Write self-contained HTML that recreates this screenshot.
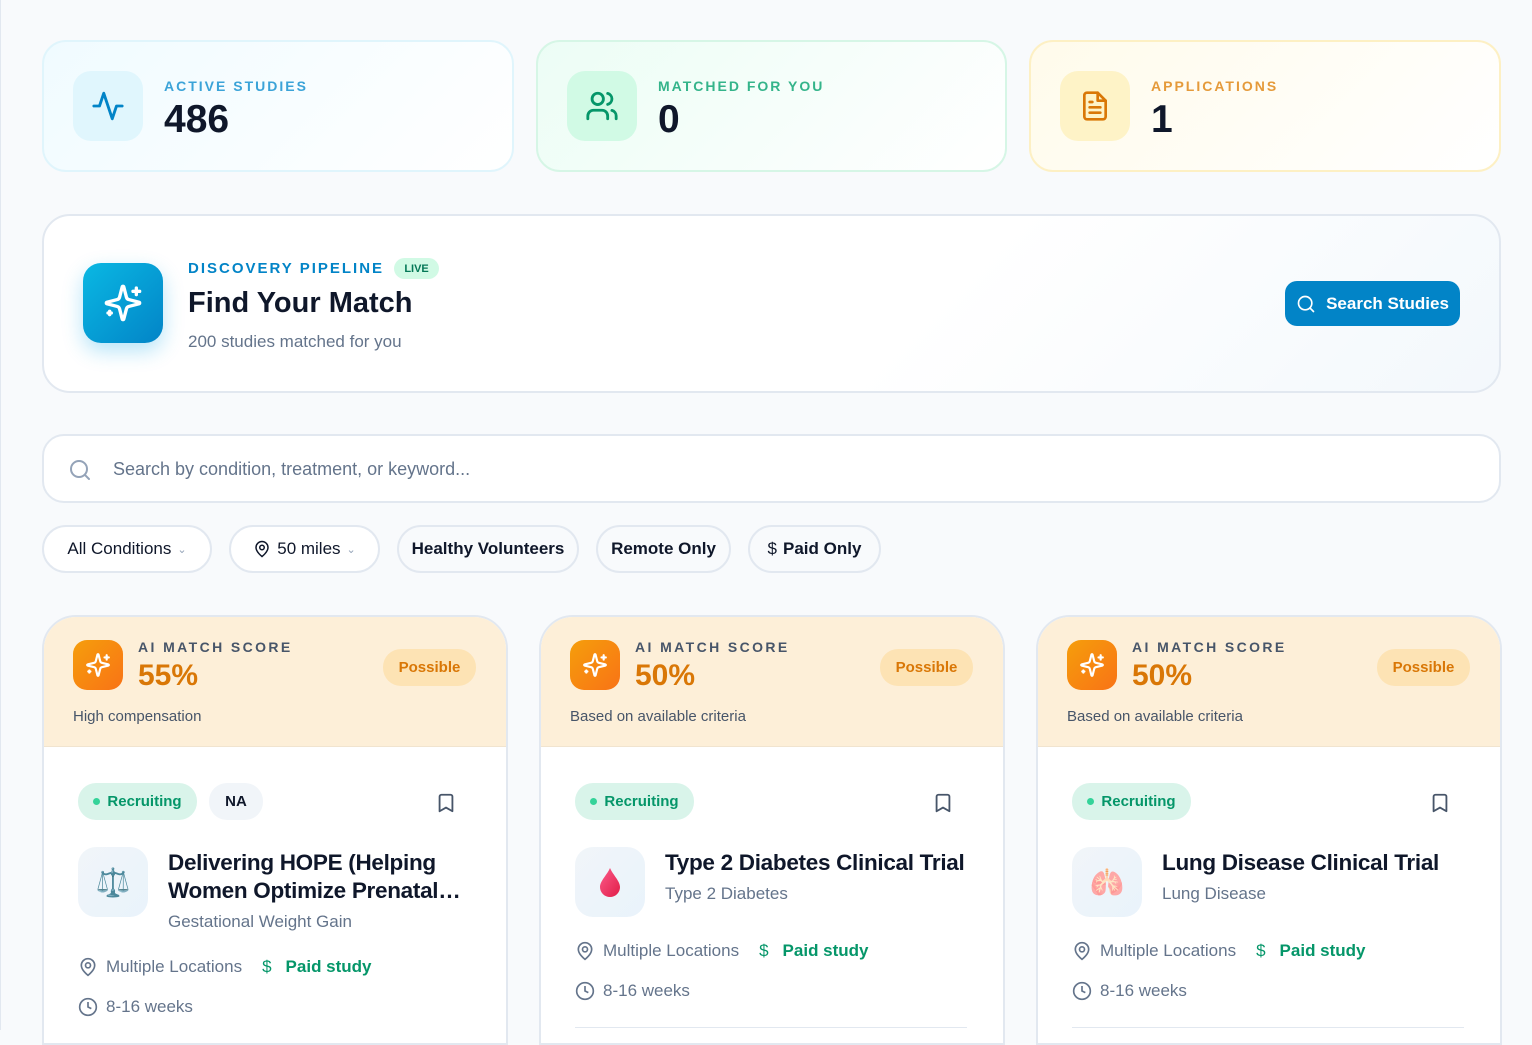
<!DOCTYPE html>
<html><head><meta charset="utf-8">
<style>
*{box-sizing:border-box;margin:0;padding:0}
body{width:1532px;height:1030px;overflow:hidden;background:#f8fafc;font-family:"Liberation Sans","DejaVu Sans",sans-serif;color:#0f172a;position:relative}
.a{position:absolute}
.stat{position:absolute;top:40px;width:472px;height:132px;border-radius:24px;border:2px solid}
.sicon{position:absolute;left:29px;top:29px;width:70px;height:70px;border-radius:18px;display:flex;align-items:center;justify-content:center}
.slabel{position:absolute;left:120px;top:36px;font-size:14px;font-weight:bold;letter-spacing:2px}
.snum{position:absolute;left:120px;top:56px;font-size:39px;font-weight:bold;color:#0f172a}
.pill{position:absolute;top:525px;height:48px;border-radius:24px;border:2px solid #e2e8f0;background:#fff;font-size:17px;display:flex;align-items:center;justify-content:center;gap:6px;color:#0f172a}
.card{position:absolute;top:615px;width:466px;height:430px;border-radius:34px 34px 0 0;border:2px solid #e2e8f0;background:#fff;overflow:hidden}
.ch{height:130px;background:#fdefd8;position:relative;border-bottom:1px solid #f1e4cf}
.ci{position:absolute;left:29px;top:23px;width:50px;height:50px;border-radius:14px;background:linear-gradient(135deg,#f59e0b,#f97316);display:flex;align-items:center;justify-content:center}
.cl{position:absolute;left:94px;top:22px;font-size:14px;font-weight:bold;letter-spacing:2.4px;color:#475569}
.cs{position:absolute;left:94px;top:42px;font-size:30px;font-weight:bold;color:#d97706}
.cp{position:absolute;right:30px;top:32px;width:93px;height:37px;border-radius:18px;background:#fde3b4;color:#d97706;font-weight:bold;font-size:15px;display:flex;align-items:center;justify-content:center}
.csub{position:absolute;left:29px;top:91px;font-size:15px;color:#475569}
.tag{position:absolute;top:166px;height:37px;border-radius:18px;font-size:15px;font-weight:bold;display:flex;align-items:center;justify-content:center;gap:7px}
.rec{left:34px;width:119px;background:#d9f4ea;color:#059669}
.rec:before{content:"";width:7px;height:7px;border-radius:50%;background:#34d399}
.bm{position:absolute;right:49px;top:174px}
.ib{position:absolute;left:34px;top:230px;width:70px;height:70px;border-radius:18px;background:linear-gradient(135deg,#f1f5f9,#e9f3fb);display:flex;align-items:center;justify-content:center;font-size:28px}
.tt{position:absolute;left:124px;top:232px;font-size:22.5px;font-weight:bold;line-height:28px;color:#0f172a;letter-spacing:-0.3px}
.st{position:absolute;left:124px;font-size:17px;color:#64748b}
.meta{position:absolute;left:34px;font-size:17px;color:#64748b;display:flex;align-items:center;gap:8px;white-space:nowrap}
.paid{color:#059669;font-weight:bold}
.div{position:absolute;left:34px;right:36px;top:410px;height:1px;background:#e2e8f0}
</style></head><body>
<div class="a" style="left:0;top:0;width:1px;height:1030px;background:#e2e8f0"></div>

<div class="stat" style="left:42px;border-color:#e0f5fc;background:linear-gradient(135deg,#f0fbff,#fff)">
 <div class="sicon" style="background:#e0f6fd"><svg width="34" height="34" viewBox="0 0 24 24" fill="none" stroke="#0284c7" stroke-width="2" stroke-linecap="round" stroke-linejoin="round"><path d="M22 12h-4l-3 9L9 3l-3 9H2"/></svg></div>
 <div class="slabel" style="color:#3ba3d8">ACTIVE STUDIES</div>
 <div class="snum">486</div>
</div>
<div class="stat" style="left:536px;width:471px;border-color:#d6f6e6;background:linear-gradient(135deg,#ecfdf5,#fff)">
 <div class="sicon" style="background:#d1fae5"><svg width="34" height="34" viewBox="0 0 24 24" fill="none" stroke="#059669" stroke-width="2" stroke-linecap="round" stroke-linejoin="round"><path d="M16 21v-2a4 4 0 0 0-4-4H6a4 4 0 0 0-4 4v2"/><circle cx="9" cy="7" r="4"/><path d="M22 21v-2a4 4 0 0 0-3-3.87M16 3.13a4 4 0 0 1 0 7.75"/></svg></div>
 <div class="slabel" style="color:#34b48a">MATCHED FOR YOU</div>
 <div class="snum">0</div>
</div>
<div class="stat" style="left:1029px;border-color:#fdf0c4;background:linear-gradient(135deg,#fffbeb,#fff)">
 <div class="sicon" style="background:#fef3c7"><svg width="32" height="32" viewBox="0 0 24 24" fill="none" stroke="#d97706" stroke-width="2" stroke-linecap="round" stroke-linejoin="round"><path d="M14 2H6a2 2 0 0 0-2 2v16a2 2 0 0 0 2 2h12a2 2 0 0 0 2-2V8z"/><path d="M14 2v6h6M16 13H8M16 17H8M10 9H8"/></svg></div>
 <div class="slabel" style="color:#e59a3a">APPLICATIONS</div>
 <div class="snum">1</div>
</div>

<div class="a" style="left:42px;top:214px;width:1459px;height:179px;border-radius:28px;border:2px solid #e2e8f0;background:linear-gradient(135deg,#fff 60%,#f3f8fc)">
 <div class="a" style="left:39px;top:47px;width:80px;height:80px;border-radius:18px;background:linear-gradient(135deg,#0ab8e3,#0284c7);box-shadow:0 8px 20px rgba(14,165,233,.3);display:flex;align-items:center;justify-content:center"><svg width="40" height="40" viewBox="0 0 24 24" fill="none" stroke="#fff" stroke-width="2" stroke-linecap="round" stroke-linejoin="round"><path d="M9.94 15.5A2 2 0 0 0 8.5 14.06l-6.14-1.58a.5.5 0 0 1 0-.96L8.5 9.94A2 2 0 0 0 9.94 8.5l1.58-6.14a.5.5 0 0 1 .96 0l1.58 6.14a2 2 0 0 0 1.44 1.44l6.14 1.58a.5.5 0 0 1 0 .96l-6.14 1.58a2 2 0 0 0-1.44 1.44l-1.58 6.14a.5.5 0 0 1-.96 0z"/><path d="M20 3v4M22 5h-4M4 17v2M5 18H3"/></svg></div>
 <div class="a" style="left:144px;top:42px;display:flex;align-items:center;gap:10px"><span style="font-size:15px;font-weight:bold;letter-spacing:2px;color:#0284c7">DISCOVERY PIPELINE</span><span style="width:45px;height:21px;border-radius:11px;background:#d1fae5;color:#047857;font-size:11px;font-weight:bold;display:flex;align-items:center;justify-content:center">LIVE</span></div>
 <div class="a" style="left:144px;top:71px;font-size:29px;font-weight:bold;color:#0f172a">Find Your Match</div>
 <div class="a" style="left:144px;top:116px;font-size:17px;color:#64748b">200 studies matched for you</div>
 <div class="a" style="left:1241px;top:65px;width:175px;height:45px;border-radius:12px;background:#0284c7;color:#fff;font-size:17px;font-weight:bold;display:flex;align-items:center;justify-content:center;gap:10px"><svg width="20" height="20" viewBox="0 0 24 24" fill="none" stroke="#fff" stroke-width="2" stroke-linecap="round"><circle cx="11" cy="11" r="8"/><path d="m21 21-4.3-4.3"/></svg>Search Studies</div>
</div>

<div class="a" style="left:42px;top:434px;width:1459px;height:69px;border-radius:22px;border:2px solid #e2e8f0;background:#fff">
 <svg class="a" style="left:24px;top:22px" width="24" height="24" viewBox="0 0 24 24" fill="none" stroke="#94a3b8" stroke-width="2" stroke-linecap="round"><circle cx="11" cy="11" r="8"/><path d="m21 21-4.3-4.3"/></svg>
 <div class="a" style="left:69px;top:23px;font-size:18px;color:#64748b">Search by condition, treatment, or keyword...</div>
</div>

<div class="pill" style="left:42px;width:170px">All Conditions <span style="font-size:11px;color:#94a3b8">&#8964;</span></div>
<div class="pill" style="left:229px;width:151px"><svg width="18" height="18" viewBox="0 0 24 24" fill="none" stroke="#0f172a" stroke-width="2"><path d="M20 10c0 6-8 12-8 12s-8-6-8-12a8 8 0 0 1 16 0Z"/><circle cx="12" cy="10" r="3"/></svg>50 miles <span style="font-size:11px;color:#94a3b8">&#8964;</span></div>
<div class="pill" style="left:397px;width:182px;background:#f8fafc;font-weight:bold">Healthy Volunteers</div>
<div class="pill" style="left:596px;width:135px;background:#f8fafc;font-weight:bold">Remote Only</div>
<div class="pill" style="left:748px;width:133px;background:#f8fafc;font-weight:bold"><span style="font-weight:normal">$</span> Paid Only</div>

<!-- Card 1 -->
<div class="card" style="left:42px">
 <div class="ch"><div class="ci"><svg width="26" height="26" viewBox="0 0 24 24" fill="none" stroke="#fff" stroke-width="2" stroke-linecap="round" stroke-linejoin="round"><path d="M9.94 15.5A2 2 0 0 0 8.5 14.06l-6.14-1.58a.5.5 0 0 1 0-.96L8.5 9.94A2 2 0 0 0 9.94 8.5l1.58-6.14a.5.5 0 0 1 .96 0l1.58 6.14a2 2 0 0 0 1.44 1.44l6.14 1.58a.5.5 0 0 1 0 .96l-6.14 1.58a2 2 0 0 0-1.44 1.44l-1.58 6.14a.5.5 0 0 1-.96 0z"/><path d="M20 3v4M22 5h-4M4 17v2M5 18H3"/></svg></div>
 <div class="cl">AI MATCH SCORE</div><div class="cs">55%</div><div class="cp">Possible</div><div class="csub">High compensation</div></div>
 <div class="tag rec">Recruiting</div>
 <div class="tag" style="left:165px;width:54px;background:#f1f5f9;color:#0f172a">NA</div>
 <svg class="bm" width="22" height="24" viewBox="0 0 24 24" fill="none" stroke="#475569" stroke-width="2" stroke-linejoin="round"><path d="m19 21-7-4-7 4V5a2 2 0 0 1 2-2h10a2 2 0 0 1 2 2v16z"/></svg>
 <div class="ib">⚖️</div>
 <div class="tt">Delivering HOPE (Helping<br>Women Optimize Prenatal…</div>
 <div class="st" style="top:295px">Gestational Weight Gain</div>
 <div class="meta" style="top:340px"><svg width="20" height="20" viewBox="0 0 24 24" fill="none" stroke="#64748b" stroke-width="2"><path d="M20 10c0 6-8 12-8 12s-8-6-8-12a8 8 0 0 1 16 0Z"/><circle cx="12" cy="10" r="3"/></svg>Multiple Locations <span class="paid" style="margin-left:12px;font-weight:normal">$</span><span class="paid" style="margin-left:6px">Paid study</span></div>
 <div class="meta" style="top:380px"><svg width="20" height="20" viewBox="0 0 24 24" fill="none" stroke="#64748b" stroke-width="2"><circle cx="12" cy="12" r="10"/><path d="M12 6v6l4 2"/></svg>8-16 weeks</div>
</div>

<!-- Card 2 -->
<div class="card" style="left:539px">
 <div class="ch"><div class="ci"><svg width="26" height="26" viewBox="0 0 24 24" fill="none" stroke="#fff" stroke-width="2" stroke-linecap="round" stroke-linejoin="round"><path d="M9.94 15.5A2 2 0 0 0 8.5 14.06l-6.14-1.58a.5.5 0 0 1 0-.96L8.5 9.94A2 2 0 0 0 9.94 8.5l1.58-6.14a.5.5 0 0 1 .96 0l1.58 6.14a2 2 0 0 0 1.44 1.44l6.14 1.58a.5.5 0 0 1 0 .96l-6.14 1.58a2 2 0 0 0-1.44 1.44l-1.58 6.14a.5.5 0 0 1-.96 0z"/><path d="M20 3v4M22 5h-4M4 17v2M5 18H3"/></svg></div>
 <div class="cl">AI MATCH SCORE</div><div class="cs">50%</div><div class="cp">Possible</div><div class="csub">Based on available criteria</div></div>
 <div class="tag rec">Recruiting</div>
 <svg class="bm" width="22" height="24" viewBox="0 0 24 24" fill="none" stroke="#475569" stroke-width="2" stroke-linejoin="round"><path d="m19 21-7-4-7 4V5a2 2 0 0 1 2-2h10a2 2 0 0 1 2 2v16z"/></svg>
 <div class="ib"><svg width="24" height="30" viewBox="0 0 24 30"><defs><linearGradient id="d" x1="0" y1="0" x2="1" y2="1"><stop offset="0" stop-color="#fb5b8a"/><stop offset="1" stop-color="#e11d48"/></linearGradient></defs><path d="M12 1C9 8 2 14 2 20a10 10 0 0 0 20 0C22 14 15 8 12 1z" fill="url(#d)"/></svg></div>
 <div class="tt">Type 2 Diabetes Clinical Trial</div>
 <div class="st" style="top:267px">Type 2 Diabetes</div>
 <div class="meta" style="top:324px"><svg width="20" height="20" viewBox="0 0 24 24" fill="none" stroke="#64748b" stroke-width="2"><path d="M20 10c0 6-8 12-8 12s-8-6-8-12a8 8 0 0 1 16 0Z"/><circle cx="12" cy="10" r="3"/></svg>Multiple Locations <span class="paid" style="margin-left:12px;font-weight:normal">$</span><span class="paid" style="margin-left:6px">Paid study</span></div>
 <div class="meta" style="top:364px"><svg width="20" height="20" viewBox="0 0 24 24" fill="none" stroke="#64748b" stroke-width="2"><circle cx="12" cy="12" r="10"/><path d="M12 6v6l4 2"/></svg>8-16 weeks</div>
 <div class="div"></div>
</div>

<!-- Card 3 -->
<div class="card" style="left:1036px">
 <div class="ch"><div class="ci"><svg width="26" height="26" viewBox="0 0 24 24" fill="none" stroke="#fff" stroke-width="2" stroke-linecap="round" stroke-linejoin="round"><path d="M9.94 15.5A2 2 0 0 0 8.5 14.06l-6.14-1.58a.5.5 0 0 1 0-.96L8.5 9.94A2 2 0 0 0 9.94 8.5l1.58-6.14a.5.5 0 0 1 .96 0l1.58 6.14a2 2 0 0 0 1.44 1.44l6.14 1.58a.5.5 0 0 1 0 .96l-6.14 1.58a2 2 0 0 0-1.44 1.44l-1.58 6.14a.5.5 0 0 1-.96 0z"/><path d="M20 3v4M22 5h-4M4 17v2M5 18H3"/></svg></div>
 <div class="cl">AI MATCH SCORE</div><div class="cs">50%</div><div class="cp">Possible</div><div class="csub">Based on available criteria</div></div>
 <div class="tag rec">Recruiting</div>
 <svg class="bm" width="22" height="24" viewBox="0 0 24 24" fill="none" stroke="#475569" stroke-width="2" stroke-linejoin="round"><path d="m19 21-7-4-7 4V5a2 2 0 0 1 2-2h10a2 2 0 0 1 2 2v16z"/></svg>
 <div class="ib">🫁</div>
 <div class="tt">Lung Disease Clinical Trial</div>
 <div class="st" style="top:267px">Lung Disease</div>
 <div class="meta" style="top:324px"><svg width="20" height="20" viewBox="0 0 24 24" fill="none" stroke="#64748b" stroke-width="2"><path d="M20 10c0 6-8 12-8 12s-8-6-8-12a8 8 0 0 1 16 0Z"/><circle cx="12" cy="10" r="3"/></svg>Multiple Locations <span class="paid" style="margin-left:12px;font-weight:normal">$</span><span class="paid" style="margin-left:6px">Paid study</span></div>
 <div class="meta" style="top:364px"><svg width="20" height="20" viewBox="0 0 24 24" fill="none" stroke="#64748b" stroke-width="2"><circle cx="12" cy="12" r="10"/><path d="M12 6v6l4 2"/></svg>8-16 weeks</div>
 <div class="div"></div>
</div>
</body></html>
